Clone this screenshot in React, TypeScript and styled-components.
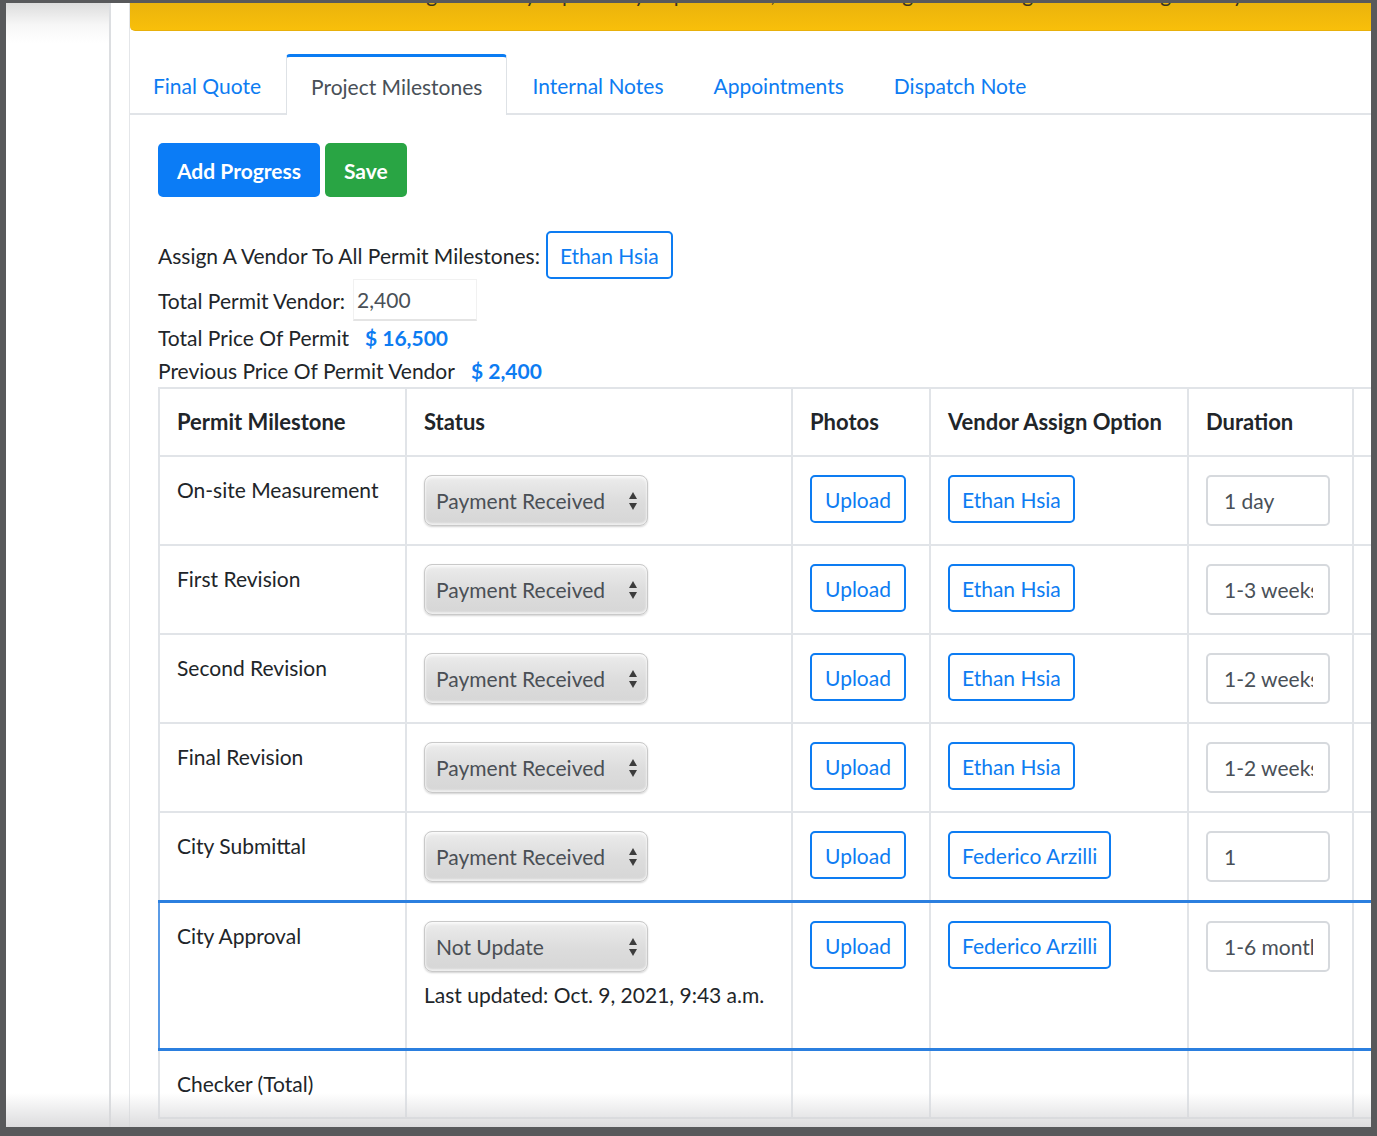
import React from "react";
import styled, { createGlobalStyle } from "styled-components";

const GlobalStyle = createGlobalStyle`
  html, body { margin: 0; padding: 0; background: #58595b; }
  body { font-family: "Lato", "Liberation Sans", sans-serif; color: #212529; }
  * { box-sizing: border-box; }
`;

const Frame = styled.div`
  width: 1377px;
  height: 1136px;
  padding: 3px 6px 9px 6px;
`;

const Screen = styled.div`
  position: relative;
  width: 100%;
  height: 100%;
  background: #fff;
  overflow: hidden;
  display: flex;
`;

const Sidebar = styled.aside`
  flex: 0 0 105px;
  background: linear-gradient(#dcdcdc 0px, #f7f7f7 22px, #fff 40px);
  border-right: 2px solid #dcdee1;
`;

const Gutter = styled.div`
  flex: 0 0 18px;
`;

const Main = styled.main`
  flex: 1;
  min-width: 0;
  border-left: 1px solid #e4e6e9;
  display: flex;
  flex-direction: column;
`;

const Banner = styled.div`
  height: 64px;
  margin-top: -36px;
  padding: 12px 40px 0;
  background: linear-gradient(#d9a40f, #f8bf0a);
  border-bottom: 1px solid #e8b00b;
  border-bottom-left-radius: 5px;
  font-size: 21px;
  line-height: 30px;
  color: #3a3320;
  white-space: nowrap;
`;

const TabBar = styled.nav`
  display: flex;
  margin-top: 23px;
  border-bottom: 2px solid #e1e4e8;
`;

const Tab = styled.div<{ $active?: boolean }>`
  padding: 0 24px;
  display: flex;
  align-items: center;
  font-size: 21px;
  color: ${(p) => (p.$active ? "#495057" : "#0d7cf2")};
  background: ${(p) => (p.$active ? "#fff" : "transparent")};
  margin-bottom: ${(p) => (p.$active ? "-2px" : "0")};
  height: ${(p) => (p.$active ? "61px" : "59px")};
  border: 1px solid ${(p) => (p.$active ? "#dee2e6" : "transparent")};
  border-top: 3px solid ${(p) => (p.$active ? "#0b7cf3" : "transparent")};
  border-bottom: none;
  border-radius: 4px 4px 0 0;

  &:first-child {
    padding-left: 22px;
  }
`;

const Content = styled.section`
  padding: 28px 0 0 28px;
`;

const ButtonRow = styled.div`
  display: flex;
  gap: 5px;
`;

const SolidButton = styled.button<{ $color: string }>`
  height: 54px;
  padding: 0 19px;
  border: none;
  border-radius: 5px;
  background: ${(p) => p.$color};
  color: #fff;
  font-family: inherit;
  font-size: 21px;
  font-weight: 700;
`;

const InfoBlock = styled.div`
  margin-top: 34px;
  display: flex;
  flex-direction: column;
`;

const InfoRow = styled.div<{ $h: number }>`
  height: ${(p) => p.$h}px;
  display: flex;
  align-items: center;
  gap: 6px;
  font-size: 21px;
`;

const Amount = styled.span`
  margin-left: 10px;
  color: #0d7cf2;
  font-weight: 700;
`;

const PlainInput = styled.input`
  width: 124px;
  height: 42px;
  margin-left: 2px;
  padding: 0 3px;
  border: 1px solid #f1f1f1;
  border-bottom: 2px solid #e4e4e4;
  font-family: inherit;
  font-size: 21px;
  color: #495057;
  background: #fff;
`;

const OutlineButton = styled.button<{ $w?: number }>`
  height: 48px;
  ${(p) => (p.$w ? `width: ${p.$w}px;` : "padding: 0 12px;")}
  border: 2px solid #0d7cf2;
  border-radius: 5px;
  background: #fff;
  color: #0d7cf2;
  font-family: inherit;
  font-size: 21px;
  white-space: nowrap;
`;

const Table = styled.table`
  width: 1344px;
  table-layout: fixed;
  border-collapse: collapse;
  font-size: 21px;
`;

const Th = styled.th`
  text-align: left;
  font-weight: 700;
  font-size: 22px;
  padding: 18px 17px;
  line-height: 30px;
  border: 2px solid #e1e4e8;
  vertical-align: middle;
`;

const Td = styled.td<{ $hl?: boolean; $first?: boolean }>`
  padding: 18px 17px 18px 17px;
  line-height: 30px;
  vertical-align: top;
  border: 2px solid #e1e4e8;
  ${(p) =>
    p.$hl
      ? `border-top: 3px solid #2b7fdf; border-bottom: 3px solid #2b7fdf;`
      : ""}
  ${(p) => (p.$hl && p.$first ? `border-left: 2px solid #5b9be6;` : "")}
`;

const SelectBox = styled.div`
  width: 224px;
  height: 51px;
  display: flex;
  align-items: center;
  justify-content: space-between;
  padding: 0 8px 0 11px;
  border: 1px solid #c9c9c9;
  border-radius: 8px;
  background: linear-gradient(#ececec, #dcdcdc 55%, #d6d6d6);
  box-shadow: inset 0 2px 3px rgba(255, 255, 255, 0.8), inset 0 -2px 2px rgba(255, 255, 255, 0.6), 0 1px 2px rgba(0, 0, 0, 0.18);
  color: #4a4f55;
  font-size: 21px;
`;

const UpdatedNote = styled.p`
  margin: 8px 0 20px;
  color: #212529;
`;

const DurationInput = styled.input`
  width: 124px;
  height: 51px;
  padding: 0 15px 0 16px;
  border: 2px solid #d6d9dd;
  border-radius: 5px;
  font-family: inherit;
  font-size: 21px;
  color: #495057;
  background: #fff;
`;

const Vignette = styled.div`
  position: absolute;
  left: 0;
  right: 0;
  bottom: 0;
  height: 34px;
  background: linear-gradient(rgba(255, 255, 255, 0), rgba(214, 214, 216, 0.85));
  pointer-events: none;
`;

const Arrows = () => (
  <svg width="12" height="24" viewBox="0 0 12 24">
    <path d="M6 3 L10 10 H2 Z" fill="#3c3c3c" />
    <path d="M6 21 L10 14 H2 Z" fill="#3c3c3c" />
  </svg>
);

type Row = {
  name: string;
  status: string;
  vendor: string;
  duration: string;
  updated?: string;
  hl?: boolean;
};

const rows: Row[] = [
  { name: "On-site Measurement", status: "Payment Received", vendor: "Ethan Hsia", duration: "1 day" },
  { name: "First Revision", status: "Payment Received", vendor: "Ethan Hsia", duration: "1-3 weeks" },
  { name: "Second Revision", status: "Payment Received", vendor: "Ethan Hsia", duration: "1-2 weeks" },
  { name: "Final Revision", status: "Payment Received", vendor: "Ethan Hsia", duration: "1-2 weeks" },
  { name: "City Submittal", status: "Payment Received", vendor: "Federico Arzilli", duration: "1" },
  {
    name: "City Approval",
    status: "Not Update",
    vendor: "Federico Arzilli",
    duration: "1-6 months",
    updated: "Last updated: Oct. 9, 2021, 9:43 a.m.",
    hl: true,
  },
];

const colWidths = [247, 386, 138, 258, 165, 150];

export default function App() {
  return (
    <>
      <GlobalStyle />
      <Frame>
        <Screen>
          <Sidebar />
          <Gutter />
          <Main>
            <Banner>
              Please note: milestone changes are only kept after you press Save, and each assigned vendor gets an email right away.
            </Banner>
            <TabBar>
              <Tab>Final Quote</Tab>
              <Tab $active>Project Milestones</Tab>
              <Tab>Internal Notes</Tab>
              <Tab>Appointments</Tab>
              <Tab>Dispatch Note</Tab>
            </TabBar>
            <Content>
              <ButtonRow>
                <SolidButton $color="#0b7cf6">Add Progress</SolidButton>
                <SolidButton $color="#29a544">Save</SolidButton>
              </ButtonRow>
              <InfoBlock>
                <InfoRow $h={48}>
                  Assign A Vendor To All Permit Milestones:
                  <OutlineButton>Ethan Hsia</OutlineButton>
                </InfoRow>
                <InfoRow $h={42}>
                  Total Permit Vendor:
                  <PlainInput readOnly value="2,400" />
                </InfoRow>
                <InfoRow $h={33}>
                  Total Price Of Permit <Amount>$ 16,500</Amount>
                </InfoRow>
                <InfoRow $h={33}>
                  Previous Price Of Permit Vendor <Amount>$ 2,400</Amount>
                </InfoRow>
              </InfoBlock>
              <Table>
                <colgroup>
                  {colWidths.map((w, i) => (
                    <col key={i} style={{ width: w }} />
                  ))}
                </colgroup>
                <thead>
                  <tr>
                    <Th>Permit Milestone</Th>
                    <Th>Status</Th>
                    <Th>Photos</Th>
                    <Th>Vendor Assign Option</Th>
                    <Th>Duration</Th>
                    <Th></Th>
                  </tr>
                </thead>
                <tbody>
                  {rows.map((r) => (
                    <tr key={r.name}>
                      <Td $hl={r.hl} $first>{r.name}</Td>
                      <Td $hl={r.hl}>
                        <SelectBox>
                          <span>{r.status}</span>
                          <Arrows />
                        </SelectBox>
                        {r.updated && <UpdatedNote>{r.updated}</UpdatedNote>}
                      </Td>
                      <Td $hl={r.hl}>
                        <OutlineButton $w={96}>Upload</OutlineButton>
                      </Td>
                      <Td $hl={r.hl}>
                        <OutlineButton>{r.vendor}</OutlineButton>
                      </Td>
                      <Td $hl={r.hl}>
                        <DurationInput readOnly value={r.duration} />
                      </Td>
                      <Td $hl={r.hl}></Td>
                    </tr>
                  ))}
                  <tr>
                    <Td>Checker (Total)</Td>
                    <Td></Td>
                    <Td></Td>
                    <Td></Td>
                    <Td></Td>
                    <Td></Td>
                  </tr>
                </tbody>
              </Table>
            </Content>
          </Main>
          <Vignette />
        </Screen>
      </Frame>
    </>
  );
}
